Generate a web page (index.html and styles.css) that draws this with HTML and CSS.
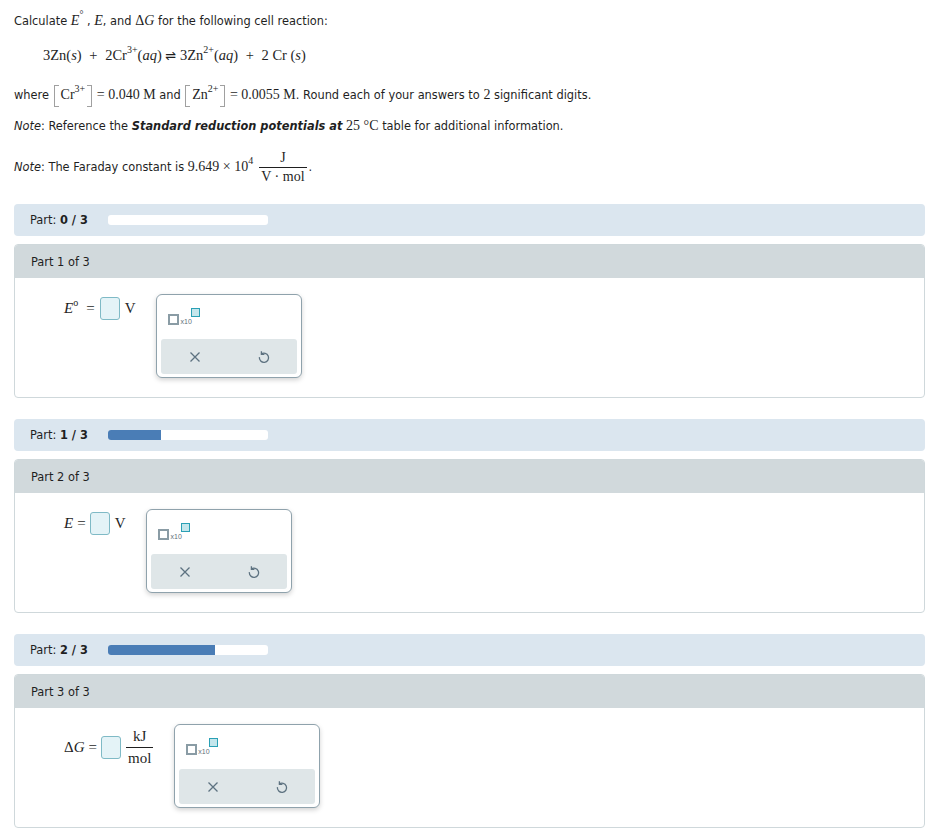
FILE: index.html
```html
<!DOCTYPE html>
<html>
<head>
<meta charset="utf-8">
<link rel="stylesheet" href="styles.css">
</head>
<body>
<div class="page">
  <div class="question">
    <p class="q-line l1">Calculate <span class="m"><i>E</i><sup class="deg">°</sup></span> , <span class="m"><i>E</i></span>, and <span class="m">Δ<i>G</i></span> for the following cell reaction:</p>
    <p class="q-line reaction m">3Zn<span class="paren">(<i>s</i>)</span> <span class="op">+</span> 2Cr<sup>3+</sup><span class="paren">(<i>aq</i>)</span> <span class="eq">⇌</span> 3Zn<sup>2+</sup><span class="paren">(<i>aq</i>)</span> <span class="op">+</span> 2 Cr <span class="paren">(<i>s</i>)</span></p>
    <p class="q-line l3">where <span class="m"><span class="br"><span class="br-l"></span>Cr<sup>3+</sup><span class="br-r"></span></span> = 0.040 M</span> and <span class="m"><span class="br"><span class="br-l"></span>Zn<sup>2+</sup><span class="br-r"></span></span> = 0.0055 M</span>. Round each of your answers to <span class="m">2</span> significant digits.</p>
    <p class="q-line l4"><i>Note</i>: Reference the <b><i>Standard reduction potentials at</i></b> <span class="m">25 °C</span> table for additional information.</p>
    <p class="q-line l5"><i>Note</i>: The Faraday constant is <span class="m">9.649 × 10<sup>4</sup></span> <span class="m frac"><span class="num">J</span><span class="den">V · mol</span></span>.</p>
  </div>

  <div class="progress-row">
    <span class="progress-label">Part: <b>0 / 3</b></span>
    <span class="track"><span class="fill" style="width:0px"></span></span>
  </div>
  <section class="part">
    <header class="part-head">Part 1 of 3</header>
    <div class="part-body">
      <div class="answer">
        <span class="m ans-math"><i>E</i><sup class="deg2">o</sup><span class="eqs wide">=</span><span class="inbox"></span><span class="unit">V</span></span>
      </div>
      <div class="pad">
        <div class="pad-top">
          <span class="sci"><span class="sq"></span><span class="x10">x10</span><span class="sq-sup"></span></span>
        </div>
        <div class="pad-bar">
          <span class="btn"><svg width="12" height="12" viewBox="0 0 12 12"><path d="M1.5 1.5 L10.5 10.5 M10.5 1.5 L1.5 10.5" stroke="#5d7280" stroke-width="1.3" fill="none"/></svg></span>
          <span class="btn"><svg width="13" height="14" viewBox="0 0 13 14"><path d="M4.2 4.1 A4.6 4.6 0 1 1 2.4 7.2" stroke="#5d7280" stroke-width="1.3" fill="none"/><path d="M4.4 1.2 V4.3 H7.4" stroke="#5d7280" stroke-width="1.3" fill="none"/></svg></span>
        </div>
      </div>
    </div>
  </section>

  <div class="progress-row gap-top">
    <span class="progress-label">Part: <b>1 / 3</b></span>
    <span class="track"><span class="fill" style="width:53px"></span></span>
  </div>
  <section class="part">
    <header class="part-head">Part 2 of 3</header>
    <div class="part-body">
      <div class="answer">
        <span class="m ans-math"><i>E</i><span class="eqs">=</span><span class="inbox"></span><span class="unit">V</span></span>
      </div>
      <div class="pad">
        <div class="pad-top">
          <span class="sci"><span class="sq"></span><span class="x10">x10</span><span class="sq-sup"></span></span>
        </div>
        <div class="pad-bar">
          <span class="btn"><svg width="12" height="12" viewBox="0 0 12 12"><path d="M1.5 1.5 L10.5 10.5 M10.5 1.5 L1.5 10.5" stroke="#5d7280" stroke-width="1.3" fill="none"/></svg></span>
          <span class="btn"><svg width="13" height="14" viewBox="0 0 13 14"><path d="M4.2 4.1 A4.6 4.6 0 1 1 2.4 7.2" stroke="#5d7280" stroke-width="1.3" fill="none"/><path d="M4.4 1.2 V4.3 H7.4" stroke="#5d7280" stroke-width="1.3" fill="none"/></svg></span>
        </div>
      </div>
    </div>
  </section>

  <div class="progress-row gap-top">
    <span class="progress-label">Part: <b>2 / 3</b></span>
    <span class="track"><span class="fill" style="width:107px"></span></span>
  </div>
  <section class="part">
    <header class="part-head">Part 3 of 3</header>
    <div class="part-body">
      <div class="answer">
        <span class="m ans-math">Δ<i>G</i><span class="eqs">=</span><span class="inbox"></span><span class="frac big"><span class="num">kJ</span><span class="den">mol</span></span></span>
      </div>
      <div class="pad">
        <div class="pad-top">
          <span class="sci"><span class="sq"></span><span class="x10">x10</span><span class="sq-sup"></span></span>
        </div>
        <div class="pad-bar">
          <span class="btn"><svg width="12" height="12" viewBox="0 0 12 12"><path d="M1.5 1.5 L10.5 10.5 M10.5 1.5 L1.5 10.5" stroke="#5d7280" stroke-width="1.3" fill="none"/></svg></span>
          <span class="btn"><svg width="13" height="14" viewBox="0 0 13 14"><path d="M4.2 4.1 A4.6 4.6 0 1 1 2.4 7.2" stroke="#5d7280" stroke-width="1.3" fill="none"/><path d="M4.4 1.2 V4.3 H7.4" stroke="#5d7280" stroke-width="1.3" fill="none"/></svg></span>
        </div>
      </div>
    </div>
  </section>
</div>
</body>
</html>
```
FILE: styles.css
```css
* { box-sizing: border-box; }
body {
  margin: 0;
  background: #fff;
  color: #1f1f1f;
  font-family: "DejaVu Sans", sans-serif;
  font-size: 11.4px;
}
.page {
  padding: 0 14px 0 14px;
}
.question { padding-top: 13px; }
.q-line {
  margin: 0;
  line-height: 16px;
}
.m {
  font-family: "Liberation Serif", "DejaVu Serif", serif;
  font-size: 14px;
}
.m sup { font-size: 10px; vertical-align: 0; position: relative; top: -7px; }
.deg { font-size: 11px; }
.l1 { height: 16px; }
.reaction {
  margin-top: 18px;
  padding-left: 29px;
  font-size: 14.5px;
  height: 20px;
  word-spacing: 0;
}
.reaction .op { margin: 0 4px; }
.reaction .eq { font-family: "DejaVu Sans", sans-serif; font-size: 13px; }
.l3 { margin-top: 18px; height: 20px; line-height: 20px; }
.br {
  display: inline-block;
  position: relative;
  padding: 0 8px;
  line-height: 20px;
  height: 22px;
  vertical-align: middle;
}
.br-l, .br-r {
  position: absolute;
  top: 0;
  bottom: 0;
  width: 5px;
  border: 1.5px solid #a0a0a0;
}
.br-l { left: 1px; border-right: none; }
.br-r { right: 1px; border-left: none; }
.l4 { margin-top: 13px; }
.l5 { margin-top: 16px; display: flex; align-items: center; gap: 0; white-space: pre; }
.frac {
  display: inline-flex;
  flex-direction: column;
  align-items: center;
  margin: 0 2px 0 6px;
  line-height: 15px;
}
.frac .num { padding: 0 2px 2px; }
.frac .den { border-top: 1px solid #1f1f1f; padding: 1px 2px 0; }

.progress-row {
  margin-top: 20px;
  height: 32px;
  background: #dbe6ef;
  border-radius: 4px;
  display: flex;
  align-items: center;
  padding-left: 16px;
}
.gap-top { margin-top: 21px; }
.progress-label { width: 78px; }
.progress-label b { font-size: 11.4px; }
.track {
  width: 160px;
  height: 10px;
  background: #fff;
  border-radius: 3px;
  overflow: hidden;
  display: flex;
}
.fill { height: 100%; background: #4a7db6; }

.part {
  margin-top: 8px;
  border: 1px solid #cfd8db;
  border-radius: 4px;
  overflow: hidden;
}
.part-head {
  height: 33px;
  background: #d1d9dc;
  display: flex;
  align-items: center;
  padding-left: 16px;
}
.part-body {
  display: flex;
  align-items: flex-start;
  padding: 16px 0 19px 49px;
}
.answer { padding-top: 3px; min-height: 40px; }
.ans-math {
  display: inline-flex;
  align-items: center;
  font-size: 15px;
  white-space: nowrap;
}
.eqs { margin: 0 4px 0 4px; }
.eqs.wide { margin: 0 5px 0 8px; }
.unit { margin-left: 5px; }
.deg2 { font-size: 9px; top: -6px !important; }
.inbox {
  display: inline-block;
  width: 20px;
  height: 23px;
  background: #e4f3f7;
  border: 1.5px solid #7fbac6;
  border-radius: 3px;
}
.frac.big { margin: 0 0 0 5px; font-size: 15px; line-height: 18px; }
.frac.big .den { border-top: 1.2px solid #1f1f1f; }
.pad {
  margin-left: 21px;
  width: 146px;
  height: 84px;
  border: 1px solid #8fa2ac;
  border-radius: 6px;
  box-shadow: 0 2px 5px rgba(0,0,0,0.18);
  background: #fff;
  padding: 0 4px 3px;
  display: flex;
  flex-direction: column;
}
.pad-top {
  height: 44px;
  padding: 13px 0 0 7px;
}
.sci { display: inline-flex; align-items: flex-end; position: relative; height: 17px; }
.sq {
  width: 11px;
  height: 11px;
  border: 2px solid #8a9ca5;
  background: #fff;
}
.x10 {
  font-family: "Liberation Sans", sans-serif;
  font-size: 7px;
  color: #5f707a;
  margin-left: 1px;
  line-height: 7px;
}
.sq-sup {
  align-self: flex-start;
  width: 9px;
  height: 9px;
  border: 1.5px solid #2aa0b5;
  background: #c4e6ec;
  margin-left: -1px;
}
.pad-bar {
  flex: 1;
  background: #dfe6e8;
  border-radius: 3px;
  display: flex;
}
.btn {
  flex: 1;
  display: flex;
  align-items: center;
  justify-content: center;
}
```
